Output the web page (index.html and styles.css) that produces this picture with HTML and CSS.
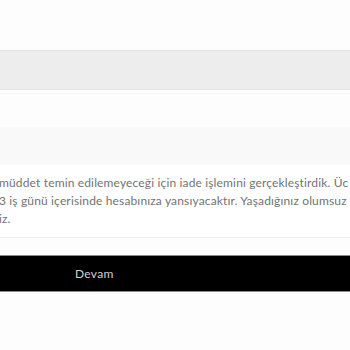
FILE: index.html
```html
<!DOCTYPE html>
<html lang="tr">
<head>
  <meta charset="UTF-8">
  <meta name="viewport" content="width=device-width, initial-scale=1.0">
  <title>İade</title>
  <link rel="stylesheet" href="styles.css">
</head>
<body>

  <div class="page">
    <div class="top-space"></div>

    <div class="search-bar"></div>
    <div class="thin-line"></div>

    <div class="notice-head"></div>

    <div class="message">
      <span class="line">müddet temin edilemeyeceği için iade işlemini gerçekleştirdik. Üc</span>
      <span class="line">3 iş günü içerisinde hesabınıza yansıyacaktır. Yaşadığınız olumsuz</span>
      <span class="line">iz.</span>
    </div>

    <div class="actions">
      <button class="btn-continue">Devam</button>
    </div>
  </div>

</body>
</html>
```

FILE: styles.css
```css
html, body {
  margin: 0;
  padding: 0;
  background-color: #fdfdfd;
  overflow: hidden;
}

body {
  font-family: Lato, "Noto Sans", sans-serif;
}

.page {
  width: 350px;
}

.top-space {
  height: 50px;
}

.search-bar {
  height: 38px;
  background-color: #ededed;
  border-top: 1px solid #e4e4e4;
  border-bottom: 1px solid #e6e6e6;
}

.thin-line {
  height: 1px;
  margin-top: 3px;
  background-color: #f4f4f4;
}

.notice-head {
  height: 38px;
  margin-top: 33px;
  background-color: #f9f9f9;
}

.message {
  padding: 9px 0 9px;
  margin-left: -1px;
  border-bottom: 1px solid #ececec;
  color: #737373;
  font-size: 12px;
  letter-spacing: 0.15px;
  line-height: 18px;
  background-color: #fff;
}

.line {
  display: block;
  white-space: nowrap;
}

.actions {
  padding-top: 17px;
}

.btn-continue {
  display: block;
  width: 100%;
  height: 37px;
  padding: 0 0 0 75px;
  text-align: left;
  background-color: #000;
  color: #d2d2d2;
  border: 0;
  border-top: 1px solid #8a8a8a;
  border-bottom: 1px solid #8a8a8a;
  font-family: Lato, "Noto Sans", sans-serif;
  font-size: 12px;
  letter-spacing: 0.3px;
}
```
